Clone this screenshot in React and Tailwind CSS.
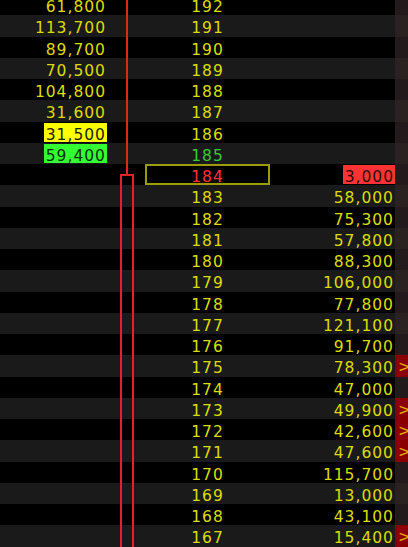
const asks = {
    192: '61,800', 191: '113,700', 190: '89,700', 189: '70,500',
    188: '104,800', 187: '31,600', 186: '31,500', 185: '59,400',
};

const bids = {
    184: '3,000', 183: '58,000', 182: '75,300', 181: '57,800', 180: '88,300',
    179: '106,000', 178: '77,800', 177: '121,100', 176: '91,700', 175: '78,300',
    174: '47,000', 173: '49,900', 172: '42,600', 171: '47,600', 170: '115,700',
    169: '13,000', 168: '43,100', 167: '15,400',
};

const flagged = [175, 173, 172, 171, 167];

const prices = Array.from({ length: 26 }, (_, i) => 192 - i);

const Row = ({ price, index }) => {
    const odd = index % 2 === 1;
    const ask = asks[price];
    const bid = bids[price];
    const flag = flagged.includes(price);

    const askCls =
        price === 186 ? 'bg-[#ffff00] text-[#202000]' :
        price === 185 ? 'bg-[#33ff33] text-[#0a300a]' :
        'text-[#dcdc00]';

    const priceCls =
        price === 185 ? 'text-[#33cc33]' :
        price === 184 ? 'text-[#ff3333]' :
        'text-[#dcdc00]';

    return (
        <div className={`flex h-[21.25px] ${odd ? 'bg-[#1a1a1a]' : 'bg-black'}`}>
            {/* ask size */}
            <div className="w-[108px] flex items-center justify-end pr-[1px]">
                {ask && <span className={`pl-[2px] pr-[1px] h-[19px] leading-[19px] pt-[3px] ${askCls}`}>{ask}</span>}
            </div>
            <div className="w-[37px]" />
            {/* price */}
            <div className={`w-[125px] flex items-center justify-center pt-[6px] ${priceCls} ${price === 184 ? 'border-2 border-[#9c9c00]' : ''}`}>
                {price}
            </div>
            {/* bid size */}
            <div className="w-[125px] flex items-center justify-end">
                {bid && (
                    <span className={`pl-[2px] pr-[1px] h-[19px] leading-[19px] pt-[3px] ${price === 184 ? 'bg-[#ff3333] text-[#300a0a]' : 'text-[#dcdc00]'}`}>
                        {bid}
                    </span>
                )}
            </div>
            {/* marker strip */}
            <div className={`w-[13px] flex items-center pl-[3px] pt-[4px] text-[#e8b000] ${flag ? 'bg-[#8a0000]' : odd ? 'bg-[#2a2121]' : 'bg-[#231b1b]'}`}>
                {flag ? '>' : ''}
            </div>
        </div>
    );
};

export default function App() {
    return (
        <div
            className="relative w-[408px] h-[547px] overflow-hidden bg-black text-[15.5px] tracking-[1px]"
            style={{ fontFamily: '"DejaVu Sans", Verdana, sans-serif' }}
        >
            <div className="-mt-[6px]">
                {prices.map((p, i) => <Row key={p} price={p} index={i} />)}
            </div>

            {/* last-trade marker line */}
            <div className="absolute left-[126px] top-0 w-[2px] h-[175px] bg-[#e02424]" />
            <div className="absolute left-[120px] top-[174px] w-[14px] h-[380px] border-[2px] border-[#e02424]" />
        </div>
    );
}
